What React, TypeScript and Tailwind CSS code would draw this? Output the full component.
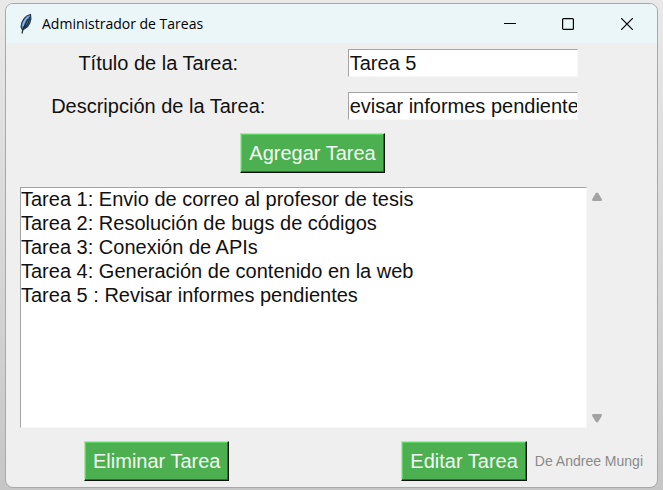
import { useState } from "react";
import type { ButtonHTMLAttributes } from "react";

const initialTasks = [
  "Tarea 1: Envio de correo al profesor de tesis",
  "Tarea 2: Resolución de bugs de códigos",
  "Tarea 3: Conexión de APIs",
  "Tarea 4: Generación de contenido en la web",
  "Tarea 5 : Revisar informes pendientes",
];

const entryClass =
  "h-7 w-[230px] border border-b-[#f7f7f7] border-l-[#a3a3a3] border-r-[#f7f7f7] border-t-[#a3a3a3] bg-white pl-px text-[20px] leading-6 outline-none";

function TaskButton(props: ButtonHTMLAttributes<HTMLButtonElement>) {
  return (
    <button
      type="button"
      className="h-10 whitespace-nowrap border border-b-[#111111] border-l-[#a6eba8] border-r-[#111111] border-t-[#a6eba8] bg-[#4caf50] px-2 text-[20px] leading-6 text-[#f4fbf4] shadow-[inset_-1px_-1px_0_#2f6d32,inset_1px_1px_0_#5fd664]"
      {...props}
    />
  );
}

function Feather() {
  return (
    <svg width="14" height="22" viewBox="0 0 14 22" aria-hidden="true">
      <path d="M11.5 1.5C7 2 2.5 7 2 14l1.5 3 2.5-1.5c4-2 7-8 5.5-14z" fill="#4a86c8" stroke="#2b3a4a" strokeWidth="1.2" />
      <path d="M9.5 3.5C6.500 6 4.500 9 4 13" stroke="#8fbdec" strokeWidth="1.4" fill="none" />
      <path d="M10.500 4c0 5-2 8-5 11M9 6L4 16l-1 4.500" stroke="#20262e" strokeWidth="1.2" fill="none" />
    </svg>
  );
}

function TitleBar() {
  return (
    <header className="flex h-[39px] items-center bg-[#eaf6f8] pl-[13px]">
      <Feather />
      <h1 className="ml-[9px] flex-1 font-['Open_Sans','Noto_Sans',sans-serif] text-[14px] leading-5 text-black">
        Administrador de Tareas
      </h1>
      <button type="button" aria-label="Minimizar" className="flex h-full w-[58px] items-center justify-center">
        <svg width="12" height="12" viewBox="0 0 12 12" fill="none" stroke="#000">
          <path d="M0 5.5h12" />
        </svg>
      </button>
      <button type="button" aria-label="Maximizar" className="flex h-full w-[58px] items-center justify-center">
        <svg width="12" height="12" viewBox="0 0 12 12" fill="none" stroke="#000" strokeWidth="1.2">
          <rect x=".6" y=".6" width="10.8" height="10.8" rx="1" />
        </svg>
      </button>
      <button type="button" aria-label="Cerrar" className="flex h-full w-[60px] items-center justify-center">
        <svg width="12" height="12" viewBox="0 0 12 12" fill="none" stroke="#000" strokeWidth="1.2">
          <path d="M0 0l12 12M12 0L0 12" />
        </svg>
      </button>
    </header>
  );
}

export default function App() {
  const [tasks, setTasks] = useState(initialTasks);
  const [title, setTitle] = useState("Tarea 5");
  const [description, setDescription] = useState("evisar informes pendientes");
  const [selected, setSelected] = useState<string[]>([]);

  const text = `${title} : ${description}`;

  return (
    <div className="min-h-screen bg-linear-to-b from-[#e9e9e9] to-[#c6c6c6] px-[5px] pb-[2px] pt-[3px] font-['Liberation_Sans',Arial,sans-serif]">
      <div className="overflow-hidden rounded-lg border border-[#a8a8a8] bg-[#efefef] text-[#111]">
        <TitleBar />
        <main className="pb-[6px] pt-[6px]">
          <div className="mr-[42px] grid grid-cols-2 items-center justify-items-center gap-y-[15px] text-[20px] leading-6">
            <label htmlFor="titulo">Título de la Tarea:</label>
            <input id="titulo" className={entryClass} value={title} onChange={(e) => setTitle(e.target.value)} />
            <label htmlFor="descripcion">Descripción de la Tarea:</label>
            <input
              id="descripcion"
              className={entryClass}
              value={description}
              onChange={(e) => setDescription(e.target.value)}
            />
          </div>
          <div className="mr-[38px] mt-[13px] flex justify-center">
            <TaskButton onClick={() => setTasks([...tasks, text])}>Agregar Tarea</TaskButton>
          </div>
          <div className="ml-[14px] mr-[50px] mt-[14px] flex">
            <select
              multiple
              size={9}
              aria-label="Tareas"
              value={selected}
              onChange={(e) => setSelected(Array.from(e.target.selectedOptions, (o) => o.value))}
              className="h-[241px] min-w-0 flex-1 overflow-hidden border border-b-[#f7f7f7] border-l-[#a3a3a3] border-r-[#f7f7f7] border-t-[#a3a3a3] bg-white p-0 text-[20px] leading-6 outline-none"
            >
              {tasks.map((task, i) => (
                <option key={i} value={String(i)} className="h-6 p-0 leading-6">
                  {task}
                </option>
              ))}
            </select>
            <div className="flex w-5 flex-col items-center justify-between py-[5px]">
              <button type="button" aria-label="Subir" className="flex">
                <svg width="12" height="9" viewBox="0 0 12 9" fill="#a3a3a3">
                  <path d="M4.8 1.2Q6 0 7.2 1.2L10.8 7Q11.5 9 10 9H2Q.5 9 1.2 7z" />
                </svg>
              </button>
              <button type="button" aria-label="Bajar" className="flex">
                <svg width="12" height="9" viewBox="0 0 12 9" fill="#a3a3a3">
                  <path d="M4.8 7.8Q6 9 7.2 7.8L10.8 2Q11.5 0 10 0H2Q.5 0 1.2 2z" />
                </svg>
              </button>
            </div>
          </div>
          <div className="mt-[13px] flex items-center justify-between pl-[78px] pr-[14px]">
            <TaskButton onClick={() => setTasks(tasks.filter((_, i) => !selected.includes(String(i))))}>
              Eliminar Tarea
            </TaskButton>
            <div className="flex items-center gap-2">
              <TaskButton onClick={() => setTasks(tasks.map((t, i) => (selected.includes(String(i)) ? text : t)))}>
                Editar Tarea
              </TaskButton>
              <span className="text-[14px] leading-4 text-[#8a8a8a]">De Andree Mungi</span>
            </div>
          </div>
        </main>
      </div>
    </div>
  );
}
